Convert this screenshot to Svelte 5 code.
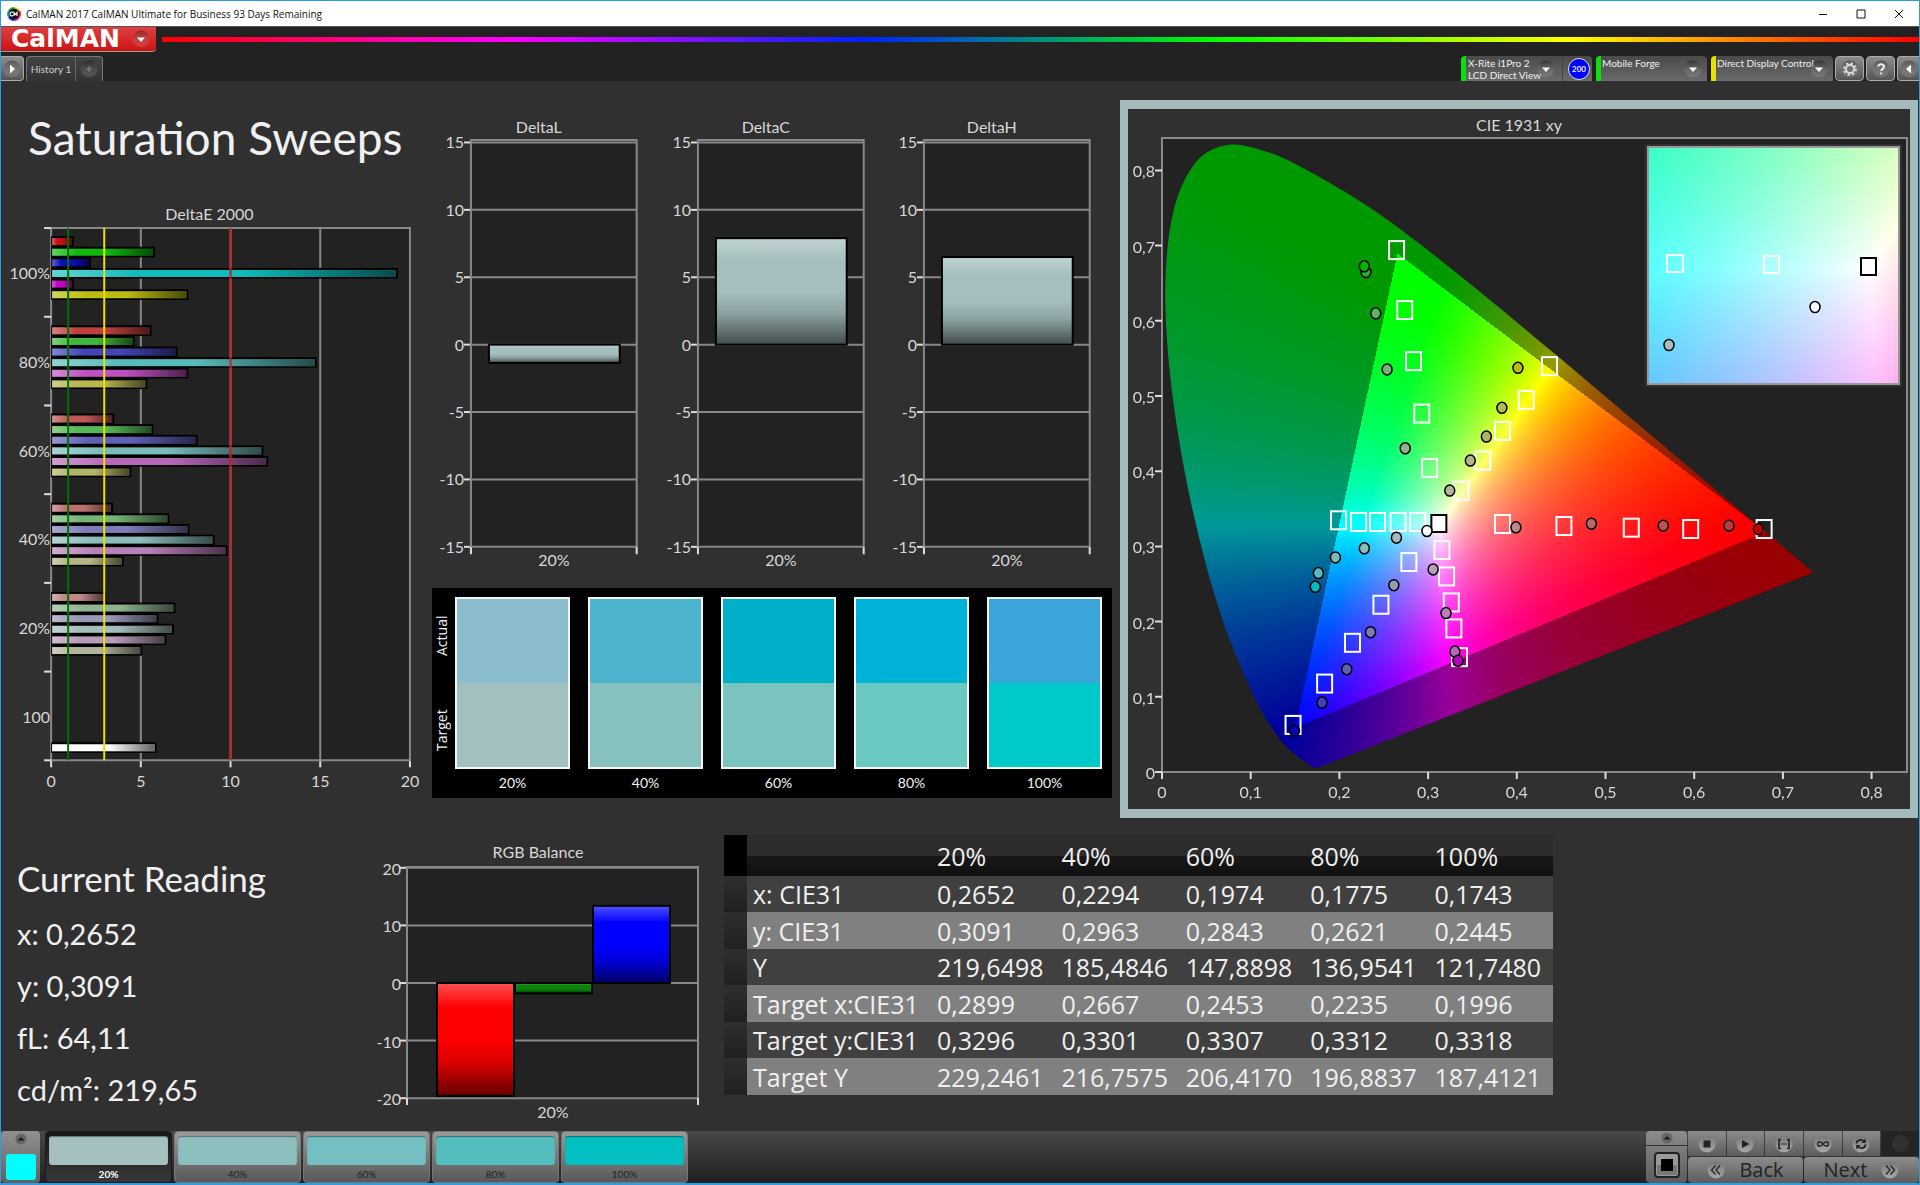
<script lang="ts">
  type Point = [number, number, string?]

  // DeltaE 2000 per saturation level, ordered R G B C M Y
  const sweeps = [
    { label: '100%', top: 36, bars: [[1.27, '#c01010'], [5.79, '#10b810'], [2.22, '#0c0cb8'], [19.33, '#10bcbc'], [1.27, '#c008c0'], [7.65, '#bcbc10']] },
    { label: '80%', top: 125, bars: [[5.6, '#c04040'], [4.65, '#40b840'], [7.04, '#4444b8'], [14.8, '#58bcbc'], [7.65, '#c050c0'], [5.36, '#b8b850']] },
    { label: '60%', top: 213, bars: [[3.52, '#c05858'], [5.7, '#58b858'], [8.16, '#6060b8'], [11.83, '#78bcbc'], [12.1, '#b868b8'], [4.47, '#b4b468']] },
    { label: '40%', top: 302, bars: [[3.45, '#bc7070'], [6.59, '#74b474'], [7.71, '#7c7cb8'], [9.11, '#8cbcbc'], [9.83, '#b880b8'], [4.04, '#b4b484']] },
    { label: '20%', top: 391, bars: [[3.07, '#bc8888'], [6.93, '#90b490'], [5.98, '#9898b8'], [6.85, '#a4bcbc'], [6.42, '#b89cb8'], [5.08, '#b4b49c']] },
    { label: '100', top: 541, bars: [[5.88, '#ffffff']] },
  ] as { label: string; top: number; bars: [number, string][] }[]

  const deltas = [
    { name: 'DeltaL', value: -1.35 },
    { name: 'DeltaC', value: 7.9 },
    { name: 'DeltaH', value: 6.5 },
  ]

  const swatches = [
    { label: '20%', actual: '#8cbdcd', target: '#a3c0c0', step: '#a6bfbf' },
    { label: '40%', actual: '#4cb4cc', target: '#86c1c0', step: '#8dbfbe' },
    { label: '60%', actual: '#00b0cb', target: '#79c4c1', step: '#74bfc1' },
    { label: '80%', actual: '#00b1d8', target: '#6bc8c1', step: '#54bebf' },
    { label: '100%', actual: '#3aa5d9', target: '#00cac9', step: '#02bfc1' },
  ]

  const readings = ['x: 0,2652', 'y: 0,3091', 'fL: 64,11', 'cd/m²: 219,65']

  const rgb = [
    { value: -19.6, fill: '#ff0000' },
    { value: -1.8, fill: '#0a850a' },
    { value: 13.4, fill: '#0000ff' },
  ]

  const rows = [
    ['x: CIE31', '0,2652', '0,2294', '0,1974', '0,1775', '0,1743'],
    ['y: CIE31', '0,3091', '0,2963', '0,2843', '0,2621', '0,2445'],
    ['Y', '219,6498', '185,4846', '147,8898', '136,9541', '121,7480'],
    ['Target x:CIE31', '0,2899', '0,2667', '0,2453', '0,2235', '0,1996'],
    ['Target y:CIE31', '0,3296', '0,3301', '0,3307', '0,3312', '0,3318'],
    ['Target Y', '229,2461', '216,7575', '206,4170', '196,8837', '187,4121'],
  ]

  const locus: Point[] = [
    [0.1741, 0.005], [0.1703, 0.0058], [0.1689, 0.0069], [0.1644, 0.0109], [0.1566, 0.0177],
    [0.144, 0.0297], [0.1355, 0.0399], [0.1241, 0.0578], [0.1096, 0.0868], [0.0913, 0.1327],
    [0.0687, 0.2007], [0.0454, 0.295], [0.0235, 0.4127], [0.0082, 0.5384], [0.0039, 0.6548],
    [0.0139, 0.7502], [0.0389, 0.812], [0.0743, 0.8338], [0.1142, 0.8262], [0.1547, 0.8059],
    [0.2296, 0.7543], [0.3016, 0.6923], [0.3731, 0.6245], [0.4441, 0.5547], [0.5125, 0.4866],
    [0.5752, 0.4242], [0.627, 0.3725], [0.6915, 0.3083], [0.7347, 0.2653],
  ]
  const gamut: Point[] = [[0.265, 0.69], [0.68, 0.32], [0.15, 0.06]]

  const targets: Point[] = [
    [0.265, 0.694], [0.2742, 0.6143], [0.2841, 0.5464], [0.2934, 0.4767], [0.3022, 0.4044],
    [0.4374, 0.5397], [0.4112, 0.4949], [0.3844, 0.4536], [0.3622, 0.4141], [0.3377, 0.3742],
    [0.1996, 0.3347], [0.2222, 0.3325], [0.2435, 0.3325], [0.2667, 0.3325], [0.2888, 0.3325],
    [0.3844, 0.3298], [0.4537, 0.3271], [0.5296, 0.3249], [0.5966, 0.3231], [0.6794, 0.3231],
    [0.3162, 0.2952], [0.3214, 0.2601], [0.3267, 0.2255], [0.3296, 0.1909], [0.336, 0.1527],
    [0.2789, 0.2792], [0.2474, 0.2224], [0.2153, 0.1718], [0.1839, 0.1176], [0.1483, 0.0626],
  ]
  const measured: Point[] = [
    [0.2299, 0.6649, '#2cb02c'], [0.2281, 0.6724, '#00b400'], [0.241, 0.6099, '#58b858'], [0.2538, 0.5353, '#74b474'], [0.2742, 0.4305, '#90b490'],
    [0.4013, 0.5375, '#c0bc00'], [0.3832, 0.4843, '#b8b850'], [0.3657, 0.4461, '#b4b468'], [0.3476, 0.4141, '#b4b484'], [0.3244, 0.3742, '#b4b49c'],
    [0.399, 0.3253, '#bc8888'], [0.4841, 0.3302, '#bc6868'], [0.5651, 0.3276, '#c05050'], [0.6392, 0.3276, '#c03838'], [0.6724, 0.3231, '#c00000'],
    [0.2643, 0.3116, '#a4bcbc'], [0.2281, 0.2974, '#8cbcbc'], [0.1955, 0.2854, '#74bcbc'], [0.1763, 0.2645, '#54bcbc'], [0.1728, 0.2463, '#00bcbc'],
    [0.3057, 0.2694, '#b89cb8'], [0.3202, 0.2113, '#b880b8'], [0.3302, 0.1602, '#b868b8'], [0.3336, 0.1478, '#bc00bc'],
    [0.2614, 0.2485, '#9898b8'], [0.2351, 0.186, '#7c7cb8'], [0.2083, 0.1367, '#6060b8'], [0.1804, 0.0923, '#4040b8'], [0.1494, 0.055, '#0000b8'],
    [0.2987, 0.3205, '#ffffff'],
  ]

  const cx = (x: number) => 34 + x * 887
  const cy = (y: number) => 663 - y * 752
  const level = (v: number) => 230 - v * 13.5
  const balance = (v: number) => 148 - v * 5.76

  // full-brightness sRGB colour for a chromaticity, out-of-range channels clamped
  function chroma(x: number, y: number) {
    const X = x / y
    const Z = (1 - x - y) / y
    const c = [
      3.2406 * X - 1.5372 - 0.4986 * Z,
      -0.9689 * X + 1.8758 + 0.0415 * Z,
      0.0557 * X - 0.204 + 1.057 * Z,
    ].map((v) => Math.max(v, 0))
    const max = Math.max(...c)
    return c.map((v) => (v / max) * 255)
  }

  function inGamut(x: number, y: number) {
    return gamut.every(([ax, ay], i) => {
      const [bx, by] = gamut[(i + 1) % 3]
      return (bx - ax) * (y - ay) - (by - ay) * (x - ax) <= 0
    })
  }

  function paint(canvas: HTMLCanvasElement, box: { x: number; y: number; sx: number; sy: number; full: boolean }) {
    const ctx = canvas.getContext('2d')!
    const { width, height } = canvas
    const img = ctx.createImageData(width, height)
    for (let py = 0; py < height; py++) {
      for (let px = 0; px < width; px++) {
        const x = box.x + px / box.sx
        const y = Math.max(box.y - py / box.sy, 0.001)
        const dim = box.full && !inGamut(x, y) ? 0.6 : 1
        const [r, g, b] = chroma(x, y)
        img.data.set([r * dim, g * dim, b * dim, 255], (py * width + px) * 4)
      }
    }
    ctx.putImageData(img, 0, 0)
    if (!box.full) return

    // cut the field down to the spectral locus, as a Catmull-Rom curve through its points
    const pts = locus.map(([x, y]) => [x * box.sx, (box.y - y) * box.sy])
    ctx.globalCompositeOperation = 'destination-in'
    ctx.beginPath()
    ctx.moveTo(pts[0][0], pts[0][1])
    for (let i = 0; i < pts.length - 1; i++) {
      const a = pts[i - 1] ?? pts[i]
      const b = pts[i]
      const c = pts[i + 1]
      const d = pts[i + 2] ?? c
      ctx.bezierCurveTo(
        b[0] + (c[0] - a[0]) / 6, b[1] + (c[1] - a[1]) / 6,
        c[0] - (d[0] - b[0]) / 6, c[1] - (d[1] - b[1]) / 6,
        c[0], c[1],
      )
    }
    ctx.closePath()
    ctx.fill()
  }
</script>

{#snippet knob(icon: string)}
  <svg class="knob" viewBox="0 0 18 18" aria-hidden="true">
    <circle cx="9" cy="9" r="8.5" fill="url(#knobFill)" />
    {#if icon === 'down'}
      <path d="M5 7.5h8l-4 4.5z" fill="#fff" />
    {:else if icon === 'right'}
      <path d="M7 4.5v9l5-4.5z" fill="#fff" />
    {:else if icon === 'left'}
      <path d="M11 4.5v9l-5-4.5z" fill="#fff" />
    {:else if icon === 'plus'}
      <path d="M9 6v6M6 9h6" stroke="#888" />
    {:else if icon === 'gear'}
      <circle cx="9" cy="9" r="4" fill="none" stroke="#ddd" stroke-width="1.8" />
      <circle cx="9" cy="9" r="5.8" fill="none" stroke="#ddd" stroke-width="2" stroke-dasharray="2.2 2.35" />
    {:else if icon === 'help'}
      <path d="M6.2 6.6C6.2 3.2 12 3.4 12 6.7c0 2.2-2.8 2.1-2.8 4.4M9.2 12.6v2" fill="none" stroke="#eee" stroke-width="2" />
    {/if}
  </svg>
{/snippet}

{#snippet dial(icon: string)}
  <svg class="dial" viewBox="0 0 18 18" aria-hidden="true">
    <circle cx="9" cy="9" r="8.5" fill="url(#dialFill)" />
    {#if icon === 'stop'}
      <path d="M5.5 5.5h7v7h-7z" fill="#222" />
    {:else if icon === 'play'}
      <path d="M6 5v8l7.5-4z" fill="#222" />
    {:else if icon === 'range'}
      <path d="M6 4.5H4v9h2M12 4.5h2v9h-2M6.2 9h1.2M8.4 9h1.2M10.6 9h1.2" fill="none" stroke="#222" stroke-width="1.6" />
    {:else if icon === 'loop'}
      <path d="M9 9C7.5 6.5 3.5 6 3.5 9s4 2.500 5.500 0 5.500-3 5.500 0-4 2.500-5.500 0z" fill="none" stroke="#222" stroke-width="1.4" />
    {:else if icon === 'refresh'}
      <path d="M4.5 8.500c0-3.500 5-5 7.500-2M13.500 9.500c0 3.500-5 5-7.500 2" fill="none" stroke="#222" stroke-width="1.8" />
      <path d="M13.8 3.500v4.500h-4.500zM4.200 14.500V10h4.500z" fill="#222" />
    {:else if icon === 'back'}
      <path d="M8.5 4.5L4.5 9l4 4.5M13 4.5L9 9l4 4.5" fill="none" stroke="#222" stroke-width="1.2" />
    {:else if icon === 'next'}
      <path d="M5 4.5L9 9l-4 4.5M9.5 4.5l4 4.5-4 4.5" fill="none" stroke="#222" stroke-width="1.2" />
    {/if}
  </svg>
{/snippet}

{#snippet upKnob()}
  <svg class="up" viewBox="0 0 12 12" aria-hidden="true">
    <circle cx="6" cy="6" r="5.5" fill="#666" />
    <path d="M2.5 7.5h7L6 4z" fill="#1a1a1a" />
  </svg>
{/snippet}

<svg class="defs" width="0" height="0" aria-hidden="true">
  <defs>
    <linearGradient id="knobFill" x2="0" y2="1">
      <stop offset="0" stop-color="#000" stop-opacity="0.35" />
      <stop offset="1" stop-color="#fff" stop-opacity="0.12" />
    </linearGradient>
    <linearGradient id="dialFill" x2="0" y2="1">
      <stop offset="0" stop-color="#787878" />
      <stop offset="1" stop-color="#a8a8a8" />
    </linearGradient>
    <linearGradient id="shadeX">
      <stop offset="0" stop-color="#fff" stop-opacity="0.35" />
      <stop offset="0.25" stop-color="#fff" stop-opacity="0" />
      <stop offset="0.55" stop-color="#000" stop-opacity="0" />
      <stop offset="1" stop-color="#000" stop-opacity="0.6" />
    </linearGradient>
    <linearGradient id="shadeY" x2="0" y2="1">
      <stop offset="0" stop-color="#fff" stop-opacity="0.32" />
      <stop offset="0.22" stop-color="#fff" stop-opacity="0" />
      <stop offset="0.5" stop-color="#000" stop-opacity="0" />
      <stop offset="0.7" stop-color="#000" stop-opacity="0.14" />
      <stop offset="1" stop-color="#000" stop-opacity="0.6" />
    </linearGradient>
  </defs>
</svg>

<div class="app">
  <header class="titlebar">
    <svg class="logo" viewBox="0 0 14 14" aria-hidden="true">
      <path d="M7 0a7 7 0 0 1 6 3.5L7 7z" fill="#e8d000" />
      <path d="M13 3.5a7 7 0 0 1 0 7L7 7z" fill="#f02020" />
      <path d="M13 10.5A7 7 0 0 1 7 14V7z" fill="#e020c0" />
      <path d="M7 14a7 7 0 0 1-6-3.5L7 7z" fill="#2030e0" />
      <path d="M1 10.5a7 7 0 0 1 0-7L7 7z" fill="#10b0d0" />
      <path d="M1 3.5A7 7 0 0 1 7 0v7z" fill="#20c030" />
      <circle cx="7" cy="7" r="5.4" fill="#111" />
      <path d="M6 5.5C4.5 4.5 3 5.5 3 7s1.5 2.500 3 1.500M7 9V5.500l1.500 2 1.500-2V9" fill="none" stroke="#fff" stroke-width="1.2" />
    </svg>
    <span class="caption">CalMAN 2017 CalMAN Ultimate for Business 93 Days Remaining</span>
    <div class="window-buttons">
      <button aria-label="Minimize"><svg viewBox="0 0 10 10"><path d="M1 5.5h8" /></svg></button>
      <button aria-label="Maximize"><svg viewBox="0 0 10 10"><path d="M1 1h8v8H1z" /></svg></button>
      <button aria-label="Close"><svg viewBox="0 0 10 10"><path d="M1 1l8 8M9 1L1 9" /></svg></button>
    </div>
  </header>

  <div class="brandbar">
    <button class="brand">CalMAN {@render knob('down')}</button>
    <div class="spectrum"></div>
  </div>

  <nav class="toolbar">
    <button class="square start" aria-label="Expand">{@render knob('right')}</button>
    <div class="tabs">
      <button class="tab">History 1</button>
      <button class="tab add" aria-label="Add history">{@render knob('plus')}</button>
    </div>
    <div class="devices">
      <div class="device meter">
        <button class="meter-menu" aria-haspopup="menu">
          <span>X-Rite i1Pro 2<br />LCD Direct View</span>
          {@render knob('down')}
        </button>
        <span class="count">200</span>
      </div>
      <div class="device source">
        <select aria-label="Source"><option>Mobile Forge</option></select>
        {@render knob('down')}
      </div>
      <div class="device display">
        <select aria-label="Display"><option>Direct Display Control</option></select>
        {@render knob('down')}
      </div>
      <button class="square" aria-label="Settings">{@render knob('gear')}</button>
      <button class="square" aria-label="Help">{@render knob('help')}</button>
      <button class="square last" aria-label="Collapse">{@render knob('left')}</button>
    </div>
  </nav>

  <main>
    <section class="upper">
      <div class="sweeps">
        <h1>Saturation Sweeps</h1>
        <svg class="chart" viewBox="0 0 430 600" role="img" aria-label="DeltaE 2000">
          <text class="mid" x="208" y="20">DeltaE 2000</text>
          <rect x="50" y="28" width="358" height="531" fill="#222" />
          {#each [0, 5, 10, 15, 20] as tick}
            <path class="grid" d="M{50 + tick * 17.9} 28V559" />
            <path class="tick" d="M{50 + tick * 17.9} 559v7" />
            <text class="mid" x={50 + tick * 17.9} y="586">{tick}</text>
          {/each}
          <path class="grid" d="M50 28H409M50 559H409" />
          {#each sweeps as group, g}
            <path class="tick" d="M43 {28 + g * 88.5}h7" />
            <text class="end" x="49" y={79 + g * 88.5}>{group.label}</text>
            {#each group.bars as [value, fill], i}
              {@const y = group.top + i * 10.6}
              <rect x="50" {y} width={value * 17.9} height="10.6" fill="#000" />
              <rect x="51" y={y + 2} width={value * 17.9 - 3} height="7" {fill} />
              <rect x="51" y={y + 2} width={value * 17.9 - 3} height="7" fill="url(#shadeX)" />
            {/each}
          {/each}
          <path class="tick" d="M43 559h7" />
          <path d="M67 28V559" stroke="#007000" stroke-width="2" />
          <path d="M103 28V559" stroke="#e8e000" stroke-width="2" />
          <path d="M229 28V559" stroke="#c82020" stroke-width="2" />
        </svg>
      </div>

      <div class="middle">
        <div class="deltas">
          {#each deltas as delta}
            {@const y = Math.min(level(delta.value), level(0))}
            {@const h = Math.abs(delta.value) * 13.5}
            <svg class="chart" viewBox="0 0 227 460" role="img" aria-label={delta.name}>
              <text class="mid" x="107" y="18">{delta.name}</text>
              <rect x="39" y="25" width="166" height="409" fill="#222" />
              {#each [15, 10, 5, 0, -5, -10, -15] as tick}
                <path class="grid" d="M39 {level(tick)}H205" />
                <path class="tick" d="M32 {level(tick)}h7" />
                <text class="end" x="32" y={level(tick) + 6}>{tick}</text>
              {/each}
              <path class="grid" d="M39 434V25H205V434" />
              <path class="tick" d="M39 433v7M205 433v7" />
              <rect x="57" {y} width="131" height={h} fill="#a5bebe" />
              <rect x="57" {y} width="131" height={h} fill="url(#shadeY)" stroke="#000" stroke-width="2" />
              <text class="mid" x="122" y="452">20%</text>
            </svg>
          {/each}
        </div>
        <div class="compare">
          <div class="sides"><span>Actual</span><span>Target</span></div>
          {#each swatches as s}
            <figure>
              <div class="pair">
                <div style="background: {s.actual}"></div>
                <div style="background: {s.target}"></div>
              </div>
              <figcaption>{s.label}</figcaption>
            </figure>
          {/each}
        </div>
      </div>

      <div class="cie">
        <svg class="chart" viewBox="0 0 782 700" role="img" aria-label="CIE 1931 xy">
          <text class="mid" x="391" y="22">CIE 1931 xy</text>
          <rect x="34" y="29" width="745" height="634" fill="#222" />
          <foreignObject x="34" y="29" width="745" height="634">
            <canvas width="745" height="634" use:paint={{ x: 0, y: 634 / 752, sx: 887, sy: 752, full: true }}></canvas>
          </foreignObject>
          <path class="grid" d="M34 29H779V663H34z" />
          {#each [0, 1, 2, 3, 4, 5, 6, 7, 8] as n}
            {@const label = n ? `0,${n}` : '0'}
            <path class="tick" d="M{cx(n / 10)} 663v7M27 {cy(n / 10)}h7" />
            <text class="mid" x={cx(n / 10)} y="689">{label}</text>
            <text class="end" x="27" y={cy(n / 10) + 7}>{label}</text>
          {/each}
          {#each targets as [x, y]}
            <rect class="target" x={cx(x) - 8} y={cy(y) - 9} width="15" height="18" />
          {/each}
          <rect class="target white" x={cx(0.3127) - 8} y={cy(0.3298) - 9} width="15" height="17" />
          {#each measured as [x, y, fill]}
            <ellipse class="reading" cx={cx(x)} cy={cy(y)} rx="5" ry="5.5" {fill} />
          {/each}

          <rect x="517" y="35" width="257" height="243" fill="#303030" />
          <foreignObject x="520" y="38" width="251" height="237">
            <canvas width="251" height="237" use:paint={{ x: 0.2602, y: 0.3598, sx: 4220, sy: 3900, full: false }}></canvas>
          </foreignObject>
          <rect class="inset" x="520" y="38" width="251" height="237" />
          <rect class="target" x="539" y="146" width="16" height="17" />
          <rect class="target" x="636" y="147" width="15" height="17" />
          <rect class="target white" x="733" y="149" width="15" height="17" />
          <ellipse class="reading" cx="541" cy="236" rx="5" ry="5.5" fill="#a5bebe" />
          <ellipse class="reading" cx="687" cy="198" rx="5" ry="5.5" fill="#fff" />
        </svg>
      </div>
    </section>

    <section class="lower">
      <div class="current">
        <h2>Current Reading</h2>
        {#each readings as reading}
          <p>{reading}</p>
        {/each}
      </div>

      <svg class="chart" viewBox="0 0 340 290" role="img" aria-label="RGB Balance">
        <text class="mid" x="167" y="23">RGB Balance</text>
        <rect x="36" y="31" width="291" height="232" fill="#222" />
        {#each [20, 10, 0, -10, -20] as tick}
          <path class="grid" d="M36 {balance(tick)}H327" />
          <path class="tick" d="M29 {balance(tick)}h7" />
          <text class="end" x="30" y={balance(tick) + 7}>{tick}</text>
        {/each}
        <path class="grid" d="M36 263V32H327V263" />
        <path class="tick" d="M36 263v7M327 263v7" />
        {#each rgb as bar, i}
          {@const y = Math.min(balance(bar.value), balance(0))}
          {@const h = Math.abs(bar.value) * 5.76}
          <rect x={66 + i * 78} {y} width="77" height={h} fill={bar.fill} />
          <rect x={66 + i * 78} {y} width="77" height={h} fill="url(#shadeY)" stroke="#000" stroke-width="2" />
        {/each}
        <text class="mid" x="182" y="283">20%</text>
      </svg>

      <table>
        <thead>
          <tr>
            <td class="handle"></td>
            <td class="name"></td>
            {#each swatches as s}<th scope="col">{s.label}</th>{/each}
          </tr>
        </thead>
        <tbody>
          {#each rows as [name, ...values]}
            <tr>
              <td class="handle"></td>
              <th scope="row">{name}</th>
              {#each values as value}<td>{value}</td>{/each}
            </tr>
          {/each}
        </tbody>
      </table>
    </section>
  </main>

  <footer>
    <button class="picker" aria-label="Pattern color">
      {@render upKnob()}
      <span class="chip"></span>
    </button>
    <div class="steps">
      {#each swatches as s, i}
        <button class="step" class:active={i === 0}>
          <span class="fill" style="background: {s.step}"></span>
          {s.label}
        </button>
      {/each}
    </div>
    <button class="window-size" aria-label="Pattern window">
      <span class="lid">{@render upKnob()}</span>
      <svg class="pattern" viewBox="0 0 26 26" aria-hidden="true">
        <rect x="1" y="1" width="24" height="24" rx="3" fill="#999" stroke="#222" stroke-width="2" />
        <path d="M3 13h20v10H3z" fill="#777" />
        <path d="M7 7h12v12H7z" fill="#000" />
      </svg>
    </button>
    <div class="transport">
      <button aria-label="Stop">{@render dial('stop')}</button>
      <button aria-label="Play">{@render dial('play')}</button>
      <button aria-label="Read series">{@render dial('range')}</button>
      <button aria-label="Read continuously">{@render dial('loop')}</button>
      <button aria-label="Refresh">{@render dial('refresh')}</button>
      <button class="off" aria-label="Record" disabled><span class="lamp"></span></button>
      <button class="nav">{@render dial('back')} Back</button>
      <button class="nav">Next {@render dial('next')}</button>
    </div>
  </footer>
</div>

<style>
  :global(body) { margin: 0; background: #303030; }
  .app {
    box-sizing: border-box;
    display: flex;
    flex-direction: column;
    min-height: 100vh;
    border: 1px solid #2f9be0;
    border-bottom-width: 2px;
    background: #303030;
    color: #f0f0f0;
    font-family: Lato, sans-serif;
    overflow: hidden;
  }
  button, select { font: inherit; color: inherit; border: 0; padding: 0; margin: 0; background: none; }
  .defs { position: absolute; }

  .titlebar { display: flex; align-items: center; height: 25px; background: #fff; color: #111; }
  .logo { width: 14px; height: 14px; margin: 0 5px 0 6px; }
  .caption { flex: 1; font: 10px/16px "Open Sans", sans-serif; }
  .window-buttons { display: flex; gap: 28px; padding-right: 15px; }
  .window-buttons button { width: 10px; height: 10px; display: flex; }
  .window-buttons svg { width: 10px; height: 10px; fill: none; stroke: #111; }

  .brandbar { display: flex; align-items: center; gap: 6px; height: 26px; background: #222; border-top: 1px solid #555; box-sizing: border-box; }
  .brand {
    display: flex;
    align-items: center;
    justify-content: space-between;
    width: 155px;
    height: 25px;
    padding: 0 6px 0 10px;
    box-sizing: border-box;
    border-radius: 0 0 4px 0;
    border-bottom: 1px solid #999;
    background: linear-gradient(#e04040, #cc1212);
    color: #fff;
    font: bold 25px/24px "DejaVu Sans", sans-serif;
  }
  .spectrum { flex: 1; height: 5px; background: linear-gradient(90deg, #f00, #f0f, #02f, #0f0, #ff0, #f00); }
  .knob { width: 18px; height: 18px; flex: none; }

  .toolbar { display: flex; align-items: flex-end; gap: 2px; height: 29px; background: #222; font-size: 10px; line-height: 12px; }
  .square {
    display: flex;
    align-items: center;
    justify-content: center;
    width: 29px;
    height: 25px;
    box-sizing: border-box;
    border: 1px solid #aaa;
    border-radius: 4px;
    background: linear-gradient(#8c8c8c, #555);
  }
  .start { width: 23px; border-left: 0; border-radius: 0 4px 4px 0; }
  .last { width: 22px; border-right: 0; border-radius: 4px 0 0 4px; }
  .tabs { display: flex; height: 25px; box-sizing: border-box; border: 1px solid #777; border-bottom: 0; border-radius: 4px 4px 0 0; background: linear-gradient(#444, #333); }
  .tab { width: 48px; color: #ccc; }
  .tab.add { display: flex; align-items: center; justify-content: center; width: 27px; border-left: 1px solid #666; }
  .devices { display: flex; gap: 2px; margin-left: auto; }
  .device {
    display: flex;
    align-items: center;
    height: 25px;
    box-sizing: border-box;
    padding-right: 5px;
    border-left: 5px solid #0ce00c;
    border-radius: 4px 4px 0 0;
    background: linear-gradient(#4a4a4a, #6a6a6a);
  }
  .meter { width: 131px; margin-right: 2px; padding-right: 2px; }
  .source { width: 111px; margin-right: 2px; }
  .display { width: 122px; border-left-color: #e8e000; }
  .meter-menu { display: flex; align-items: center; flex: 1; min-width: 0; height: 25px; padding-left: 2px; text-align: left; border-right: 1px solid #444; }
  .meter-menu span { flex: 1; min-width: 0; white-space: nowrap; }
  .meter-menu .knob { margin-right: 7px; }
  .count {
    flex: none;
    width: 22px;
    height: 22px;
    margin-left: 5px;
    box-sizing: border-box;
    border: 1px solid #ddd;
    border-radius: 50%;
    background: #00f;
    font-size: 8px;
    font-weight: bold;
    line-height: 20px;
    text-align: center;
  }
  .device select { appearance: none; flex: 1; min-width: 0; height: 25px; margin-right: -12px; padding: 0 0 11px 1px; }

  main { flex: 1; }
  .chart { display: block; width: 100%; font-size: 16px; }
  .chart text { fill: #d8d8d8; }
  .mid { text-anchor: middle; }
  .end { text-anchor: end; }
  .grid { stroke: #888; stroke-width: 2; fill: none; }
  .tick { stroke: #ddd; stroke-width: 2; }
  .target { fill: none; stroke: #fff; stroke-width: 2; }
  .target.white { fill: #fff; stroke: #000; }
  .reading { stroke: #000; stroke-width: 1.5; }
  .inset { fill: none; stroke: #999; stroke-width: 2; }
  canvas { display: block; width: 100%; height: 100%; }

  .upper { display: grid; grid-template-columns: 431fr 680fr 8fr 799fr; align-items: start; }
  h1 { margin: 0; padding: 27px 0 32px 27px; font-size: 46px; line-height: 60px; font-weight: 400; white-space: nowrap; }
  .middle { padding-top: 34px; }
  .deltas { display: grid; grid-template-columns: repeat(3, 1fr); }
  .compare { display: flex; gap: 18px; margin-top: 14px; padding: 9px 10px 8px 5px; height: 193px; background: #000; font-size: 14px; line-height: 18px; }
  .compare figure { flex: 1; margin: 0; text-align: center; }
  .pair { height: 172px; box-sizing: border-box; border: 2px solid #f4f4f4; display: grid; grid-template-rows: 1fr 1fr; }
  figcaption { padding-top: 5px; }
  .sides { flex: none; display: grid; grid-template-rows: 1fr 1fr; gap: 16px; width: 18px; height: 172px; margin: 0 -14px 0 -4px; font: 14px/18px "Open Sans", sans-serif; }
  .sides span { writing-mode: vertical-rl; transform: rotate(180deg); text-align: center; }
  .cie { grid-column: 4; margin-top: 19px; margin-right: 1px; border: 8px solid #a5bbbb; border-top-width: 9px; border-bottom-width: 9px; }

  .lower { display: grid; grid-template-columns: 370fr 340fr 13fr 829fr 366fr; align-items: start; padding-top: 17px; }
  .current { padding: 19px 0 0 16px; }
  h2 { margin: 0 0 6px; font-size: 35px; line-height: 48px; font-weight: 400; white-space: nowrap; }
  .current p { margin: 0; padding: 4px 0; font-size: 29px; line-height: 44px; white-space: nowrap; }
  table { grid-column: 4; width: 100%; table-layout: fixed; border-collapse: collapse; font: 25px/30px "Open Sans", sans-serif; }
  table th { font-weight: 400; text-align: left; }
  table td, table th { height: 36px; padding: 0 0 0 6px; white-space: nowrap; }
  table .handle { width: 17px; background: linear-gradient(#2e2e2e, #202020); }
  table .name { width: 178px; }
  thead tr { background: linear-gradient(#2c2c2c 50%, #181818 50%, #101010); }
  table thead td, table thead th { height: 41px; }
  table thead .handle { background: #000; }
  tbody tr { background: #404040; }
  tbody tr:nth-child(even) { background: #808080; }
  tbody tr:nth-child(even) td, tbody tr:nth-child(even) th { height: 37px; }

  footer { display: flex; height: 52px; background: linear-gradient(#484848, #202020); font-size: 10px; line-height: 16px; color: #222; }
  .picker { display: flex; flex-direction: column; align-items: center; gap: 9px; width: 39px; padding-top: 2px; border-radius: 4px; background: linear-gradient(#909090, #606060); }
  .up { width: 12px; height: 12px; flex: none; }
  .chip { width: 30px; height: 26px; border-radius: 3px; background: #0ff; }
  .steps { flex: 1; display: flex; gap: 2px; padding-left: 5px; }
  .step { display: flex; flex-direction: column; align-items: center; width: 127px; padding: 4px 3px 0; box-sizing: border-box; border: 1px solid #777; border-radius: 4px; background: linear-gradient(#9a9a9a, #585858); }
  .step.active { border-color: #1a1a1a; background: linear-gradient(#181818, #383838); color: #fff; font-weight: bold; }
  .fill { width: 100%; height: 31px; margin-bottom: 1px; border-radius: 3px; box-shadow: inset 0 1px 1px rgba(0, 0, 0, 0.4); }
  .window-size { display: flex; flex-direction: column; align-items: center; width: 41px; margin-right: 1px; border-radius: 4px; background: linear-gradient(#8c8c8c, #5c5c5c); }
  .lid { display: flex; justify-content: center; width: 100%; height: 15px; padding-top: 1px; box-sizing: border-box; border-bottom: 1px solid #333; }
  .pattern { width: 26px; height: 26px; margin-top: 6px; }
  .transport { display: grid; grid-template-columns: repeat(6, 1fr); grid-template-rows: 25px 26px; gap: 1px; width: 231px; }
  .transport button { display: flex; align-items: center; justify-content: center; background: linear-gradient(#8c8c8c, #5c5c5c); }
  .transport .off { background: #242424; }
  .lamp { width: 17px; height: 17px; border-radius: 50%; background: #303030; }
  .dial { width: 18px; height: 18px; flex: none; }
  .transport .nav { grid-column: span 3; gap: 14px; font: 20px/24px "Open Sans", sans-serif; border-radius: 4px; }
</style>
